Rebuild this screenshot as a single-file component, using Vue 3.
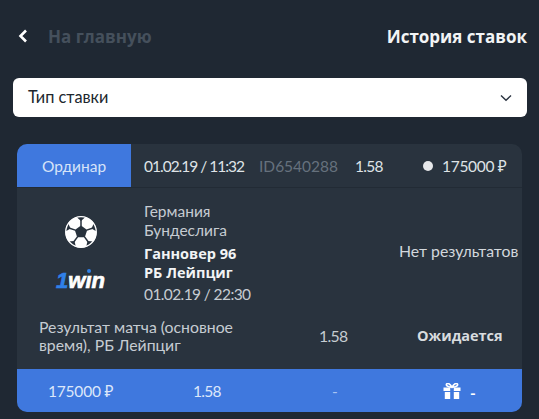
<script setup>
const header = { title: 'История ставок', back: 'На главную' }
const seams = [0, 72, 144, 216, 288]
</script>

<template>
  <div class="page">
    <header class="top">
      <div class="back">
        <svg class="back-icon" width="10" height="14" viewBox="0 0 10 14"><path d="M8 1.500 2.500 7 8 12.500" fill="none" stroke="#fff" stroke-width="2.600"/></svg>
        <span class="back-text">{{ header.back }}</span>
      </div>
      <h1 class="title">{{ header.title }}</h1>
    </header>

    <div class="select">
      <span class="select-text">Тип ставки</span>
      <svg width="12" height="8" viewBox="0 0 12 8"><path d="M1 1.500 6 6.300l5-4.800" fill="none" stroke="#2a3340" stroke-width="1.400"/></svg>
    </div>

    <section class="card">
      <div class="head">
        <div class="tab">Ординар</div>
        <span class="date">01.02.19 / 11:32</span>
        <span class="id">ID6540288</span>
        <span class="coef">1.58</span>
        <span class="sum"><i class="dot"></i>175000 ₽</span>
      </div>

      <div class="match">
        <div class="brand">
          <svg width="32" height="32" viewBox="0 0 32 32">
            <circle cx="16" cy="16" r="15.500" fill="#fff"/>
            <g v-for="a in seams" :key="a" :transform="`rotate(${a} 16 16)`">
              <path d="M16 10V4" stroke="#27313c" stroke-width="1.500"/>
              <path d="M16 5 11 .5h10z" fill="#27313c"/>
            </g>
            <path d="M16 9.500l6.200 4.500-2.400 7.200h-7.600L9.800 14z" fill="#27313c"/>
            <circle cx="16" cy="16" r="15.300" fill="none" stroke="#fff" stroke-width="1.300"/>
          </svg>
          <div class="logo"><span class="one">1</span>w<span class="i">ı</span>n</div>
        </div>
        <div class="teams">
          <div>Германия</div>
          <div>Бундеслига</div>
          <div class="names"><b>Ганновер 96</b><b>РБ Лейпциг</b></div>
          <div class="kickoff">01.02.19 / 22:30</div>
        </div>
        <div class="none">Нет результатов</div>
      </div>

      <div class="result">
        <div class="market">Результат матча (основное время), РБ Лейпциг</div>
        <div class="res-coef">1.58</div>
        <div class="status">Ожидается</div>
      </div>

      <div class="foot">
        <span class="f1">175000 ₽</span>
        <span class="f2">1.58</span>
        <span class="f3">-</span>
        <span class="f4">
          <svg width="18" height="16" viewBox="0 0 18 16">
            <path d="M9 4.200C7 .6 4.600-.2 3.600 1 2.600 2.400 5 4.200 9 4.200 13 4.200 15.400 2.400 14.400 1 13.400-.2 11 .6 9 4.200z" fill="none" stroke="#fff" stroke-width="1.600"/>
            <path d="M.5 4.500h6.700v3.600H.5zM10.800 4.500h6.700v3.600h-6.700zM1.800 9h5.400v7H1.800zM10.800 9h5.400v7h-5.400z" fill="#fff"/>
          </svg>
          <b class="dash">-</b>
        </span>
      </div>
    </section>
  </div>
</template>

<style>
html, body { margin: 0; background: #1f2833; }
</style>

<style scoped>
.page {
  width: 539px;
  height: 419px;
  box-sizing: border-box;
  padding: 23px 12px 0 13px;
  background: #1f2833;
  font-family: Lato, "Open Sans", "Noto Sans", sans-serif;
  overflow: hidden;
  color: #dfe3e7;
}
.top { display: flex; justify-content: space-between; align-items: center; height: 26px; }
.back { display: flex; align-items: center; gap: 20px; padding-left: 5px; }
.back-icon { display: block; }
.back-text, .title { font-family: "Open Sans", sans-serif; font-size: 17px; font-weight: 700; }
.back-text { color: #45505c; }
.title { margin: 0; color: #f2f4f5; }
.select {
  margin-top: 29px;
  height: 39px;
  box-sizing: border-box;
  padding: 0 15px;
  display: flex;
  align-items: center;
  justify-content: space-between;
  background: #fff;
  border-radius: 6px;
  color: #20262d;
  font-size: 16.300px;
}
.select-text { margin-bottom: 3px; }
.card {
  margin: 27px 5px 0 4px;
  background: #29333e;
  border-radius: 10px;
  overflow: hidden;
  height: 268px;
  display: flex;
  flex-direction: column;
}
.head {
  height: 44px;
  flex: none;
  display: flex;
  align-items: center;
  font-size: 15.500px;
  border-bottom: 1px solid #222b35;
  box-sizing: border-box;
}
.tab {
  width: 114px;
  height: 43px;
  flex: none;
  display: flex;
  align-items: center;
  justify-content: center;
  background: #3f78de;
  color: #d6e3f8;
}
.date { margin-left: 13px; width: 115px; white-space: nowrap; letter-spacing: -1px; }
.id { width: 96px; color: #66717d; white-space: nowrap; }
.coef { width: 68px; letter-spacing: -0.7px; }
.sum { display: flex; align-items: center; white-space: nowrap; letter-spacing: -0.3px; }
.dot { width: 10px; height: 10px; border-radius: 50%; background: #e6e8ea; margin-right: 9px; }
.match { flex: none; display: flex; height: 125px; padding-top: 14px; box-sizing: border-box; }
.brand {
  width: 127px;
  flex: none;
  display: flex;
  flex-direction: column;
  align-items: center;
  padding-top: 14px;
  box-sizing: border-box;
}
.logo {
  margin-top: 21px;
  font-family: "Liberation Sans", sans-serif;
  font-style: italic;
  font-weight: 700;
  font-size: 22px;
  line-height: 24px;
  color: #fff;
  -webkit-text-stroke: 0.7px #fff;
}
.one { color: #2f80e8; -webkit-text-stroke: 0.7px #2f80e8; }
.i { position: relative; }
.i::before {
  content: "";
  position: absolute;
  left: 2px;
  top: 1px;
  width: 4px;
  height: 4px;
  border-radius: 50%;
  background: #2f80e8;
}
.teams { width: 249px; flex: none; font-size: 15.500px; line-height: 19px; color: #c6ccd2; }
.kickoff { letter-spacing: -0.6px; }
.names { margin: 4px 0 3px; display: flex; flex-direction: column; color: #f2f4f5; font-family: "Open Sans", sans-serif; font-size: 14.500px; }
.none { font-size: 15.800px; line-height: 19px; padding-top: 39px; white-space: nowrap; color: #d3d8dd; margin-left: 6px; }
.result { flex: none; display: flex; align-items: center; height: 56px; padding-left: 22px; padding-bottom: 11px; box-sizing: border-box; font-size: 15.800px; line-height: 18px; }
.market { width: 205px; margin-right: 75px; flex: none; color: #c6ccd2; }
.res-coef { width: 98px; flex: none; color: #c6ccd2; letter-spacing: -0.7px; }
.status { font-family: "Open Sans", sans-serif; font-size: 14.500px; font-weight: 700; color: #d8dcdf; white-space: nowrap; }
.foot {
  flex: 1;
  display: flex;
  align-items: center;
  background: #3f78de;
  color: #dce7fa;
  font-size: 15.500px;
}
.f1 { width: 176px; padding-left: 31px; box-sizing: border-box; white-space: nowrap; letter-spacing: -0.2px; }
.f2 { width: 139px; letter-spacing: -0.7px; }
.f3 { width: 111px; color: #a9c4f2; }
.f4 { display: flex; align-items: center; gap: 9px; color: #fff; }
.dash { margin-top: 5px; }
</style>
